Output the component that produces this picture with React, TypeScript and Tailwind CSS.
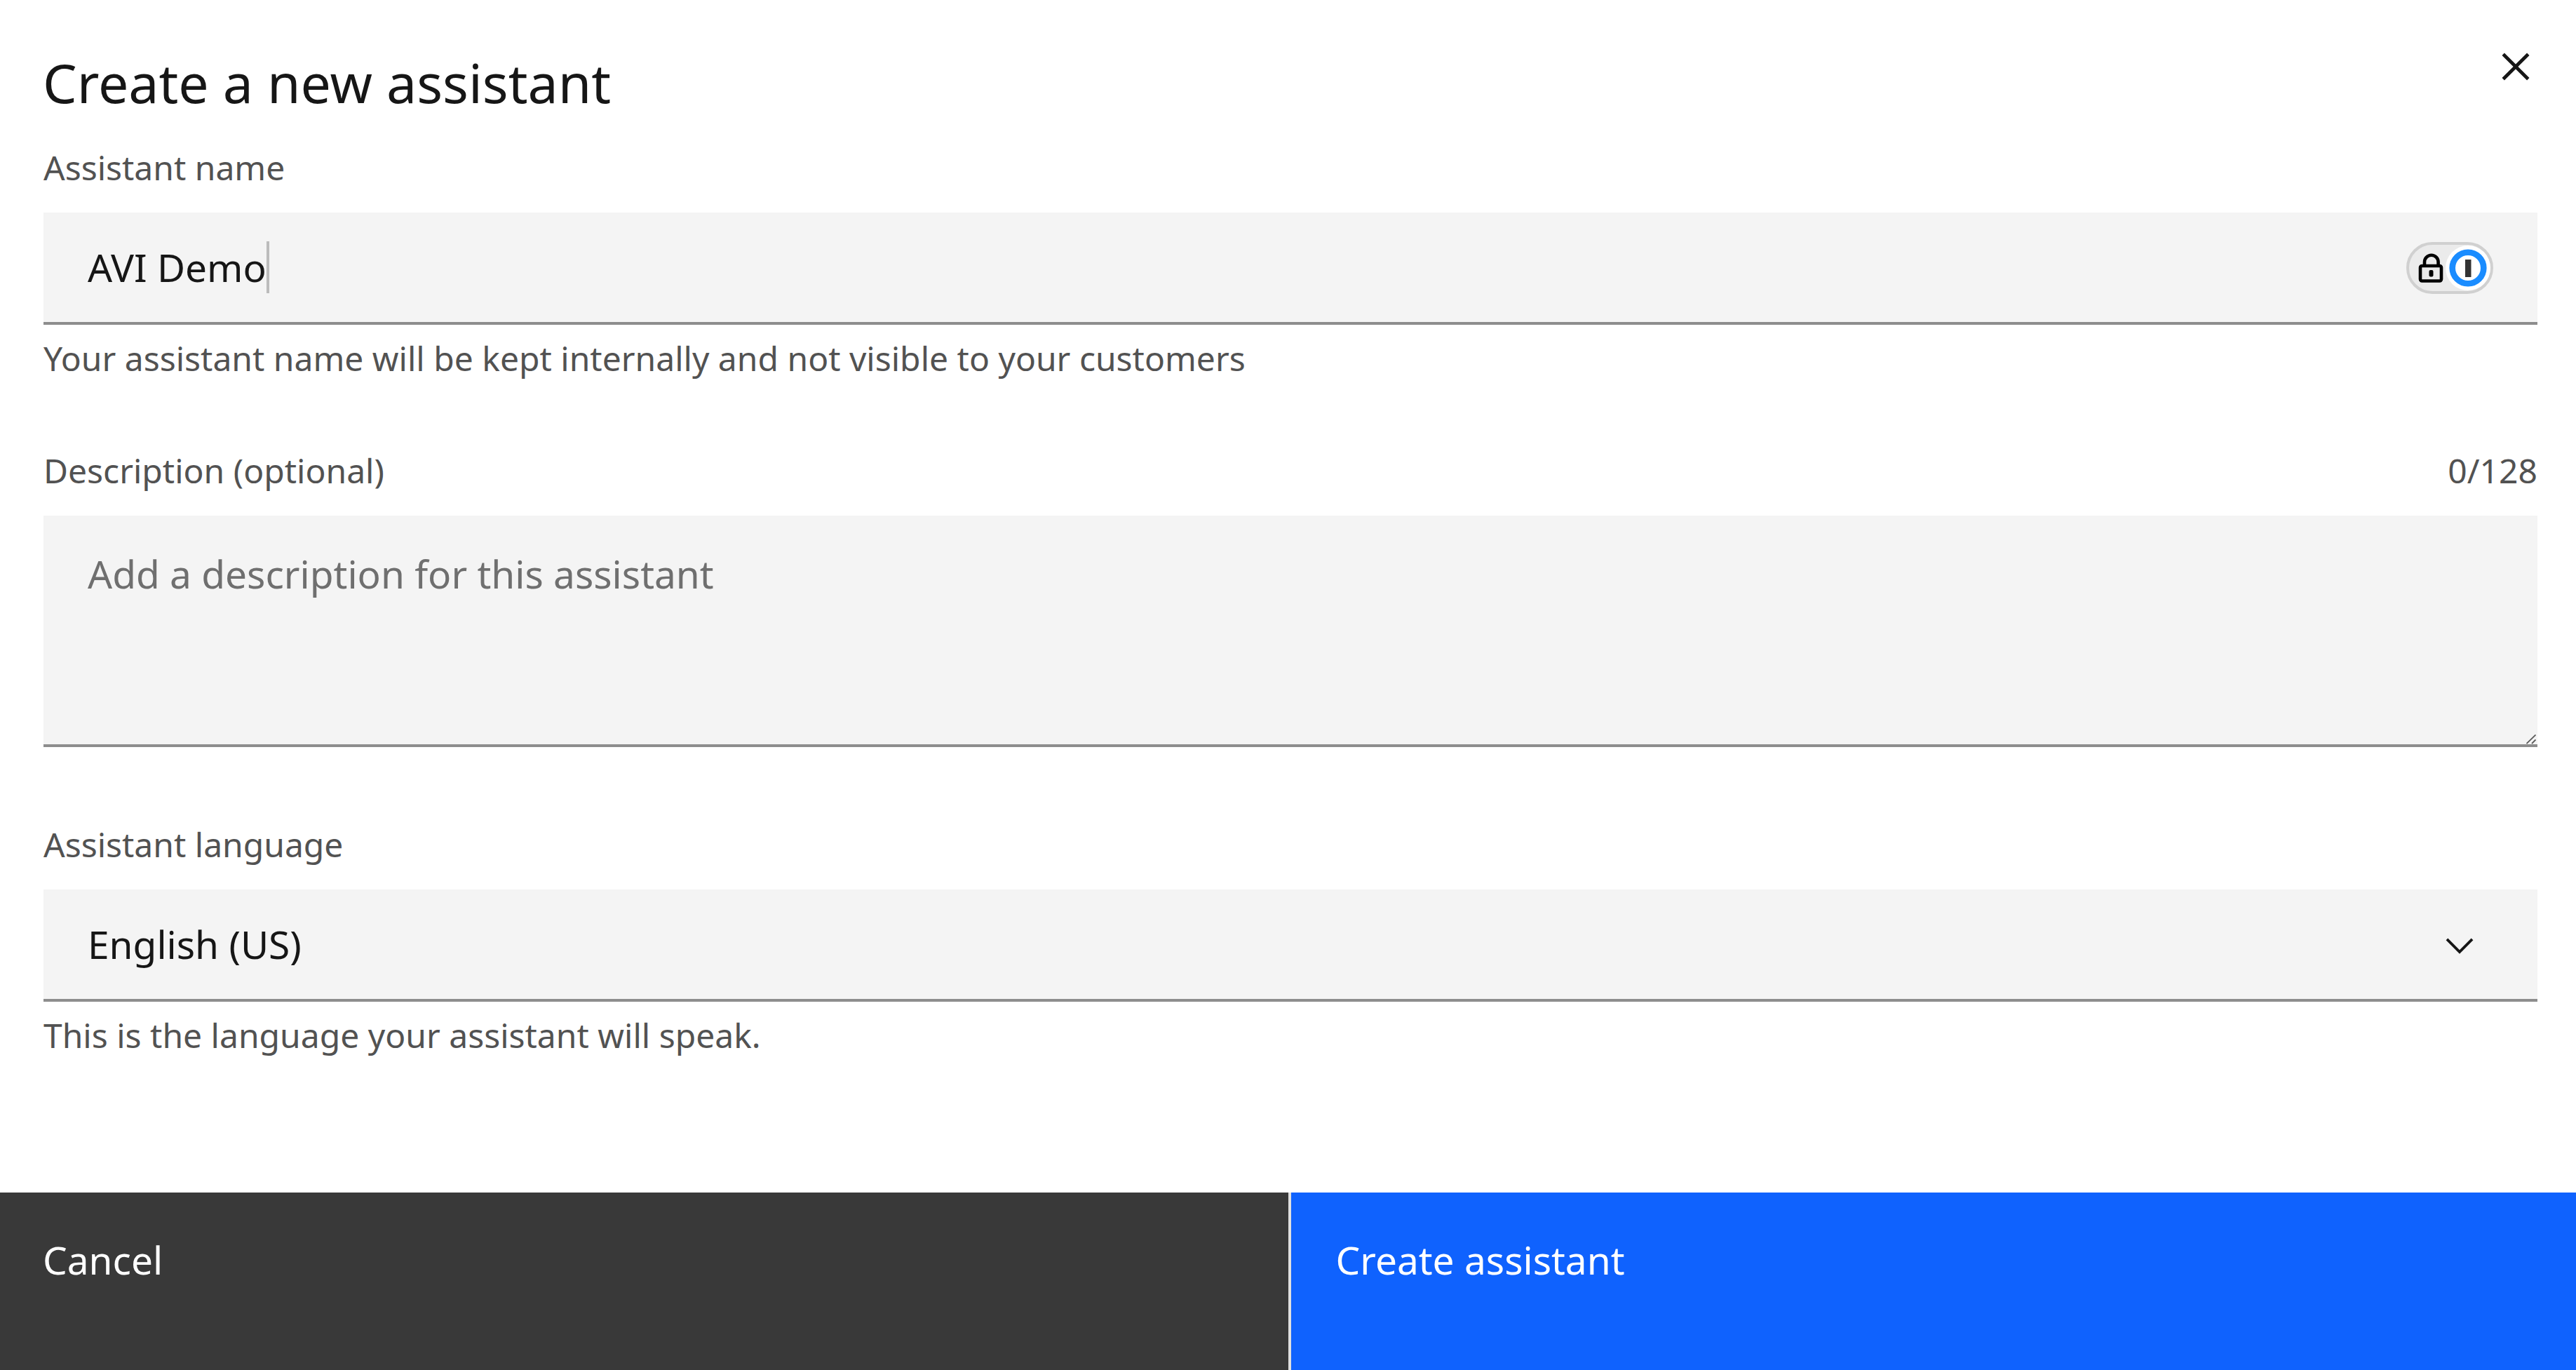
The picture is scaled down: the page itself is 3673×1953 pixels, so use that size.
import { useState } from "react";
import type { ReactNode } from "react";

const labelClass = "text-[48px] leading-[64px] text-[#525252]";

function CloseIcon() {
  return (
    <svg viewBox="0 0 32 32" className="size-[78px]" fill="currentColor" aria-hidden="true">
      <path d="M24 9.4 22.6 8 16 14.6 9.4 8 8 9.4l6.6 6.6L8 22.6 9.4 24l6.6-6.6 6.6 6.6 1.4-1.4-6.6-6.6L24 9.4z" />
    </svg>
  );
}

function ChevronDownIcon() {
  return (
    <svg viewBox="0 0 16 16" className="size-[62px]" fill="#161616" aria-hidden="true">
      <path d="M8 11 3 6l.7-.7L8 9.6l4.3-4.3.7.7z" />
    </svg>
  );
}

function PasswordManagerBadge() {
  return (
    <svg viewBox="0 0 124 74" className="h-[74px] w-[124px]" aria-hidden="true">
      <rect x="2" y="2" width="120" height="70" rx="35" fill="#ebebeb" stroke="#d0d0d0" strokeWidth="4" />
      <circle cx="88" cy="37" r="32" fill="#fff" />
      <circle cx="88" cy="37" r="22.3" fill="none" stroke="#1a8cff" strokeWidth="8.6" />
      <rect x="84" y="25" width="8.5" height="25" fill="#333" />
      <path d="M26 33v-4.500a9.800 9.800 0 0 1 19.600 0V33" fill="none" stroke="#000" strokeWidth="4.6" />
      <rect x="20" y="34" width="30" height="21.5" rx="2.5" fill="none" stroke="#000" strokeWidth="4.6" />
      <rect x="32.5" y="40" width="6" height="9.5" rx="2" fill="#000" />
    </svg>
  );
}

function ResizeHandle() {
  return (
    <svg viewBox="0 0 14 14" className="size-3.5" stroke="#5c5c5c" strokeWidth="1.8" aria-hidden="true">
      <path d="M.5 13 13.5 .5M8 13l5.500-5.500" fill="none" />
    </svg>
  );
}

function Helper({ id, children }: { id: string; children: ReactNode }) {
  return (
    <p id={id} className="mt-4 text-[48px] leading-[64px] text-[#525252]">
      {children}
    </p>
  );
}

export default function App() {
  const [name, setName] = useState("AVI Demo");
  const [description, setDescription] = useState("");
  const [language, setLanguage] = useState("en-US");

  return (
    <form
      className="flex min-h-screen flex-col bg-white font-['Noto_Sans',sans-serif] text-[#161616]"
      onSubmit={(event) => event.preventDefault()}
    >
      <header className="flex items-start justify-between pt-14 pr-[47px] pl-[61px]">
        <h1 className="mt-3 text-[77px] leading-[100px]">Create a new assistant</h1>
        <button type="button" aria-label="Close">
          <CloseIcon />
        </button>
      </header>

      <main className="pt-[39px] pr-[55px] pb-24 pl-[62px]">
        <section>
          <label htmlFor="assistant-name" className={`block ${labelClass}`}>
            Assistant name
          </label>
          <div className="mt-8 flex h-[160px] items-center border-b-4 border-[#8d8d8d] bg-[#f4f4f4] pr-[63px] pl-[63px]">
            <input
              id="assistant-name"
              type="text"
              value={name}
              aria-describedby="assistant-name-help"
              onChange={(event) => setName(event.target.value)}
              className="[field-sizing:content] h-20 bg-transparent text-[55px] leading-[80px] outline-none"
            />
            <span className="h-[74px] w-1 bg-[#bcbcbc]" aria-hidden="true" />
            <span className="ml-auto pt-0.5">
              <PasswordManagerBadge />
            </span>
          </div>
          <Helper id="assistant-name-help">
            Your assistant name will be kept internally and not visible to your customers
          </Helper>
        </section>

        <section className="mt-24">
          <div className="flex justify-between">
            <label htmlFor="description" className={labelClass}>
              Description (optional)
            </label>
            <span className={labelClass}>{description.length}/128</span>
          </div>
          <div className="relative mt-8">
            <textarea
              id="description"
              maxLength={128}
              value={description}
              placeholder="Add a description for this assistant"
              onChange={(event) => setDescription(event.target.value)}
              className="block h-[330px] w-full resize-none border-b-4 border-[#8d8d8d] bg-[#f4f4f4] px-[63px] pt-[43px] text-[55px] leading-[80px] outline-none placeholder:text-[#6f6f6f]"
            />
            <span className="pointer-events-none absolute right-0.5 bottom-1">
              <ResizeHandle />
            </span>
          </div>
        </section>

        <section className="mt-[107px]">
          <label htmlFor="language" className={`block ${labelClass}`}>
            Assistant language
          </label>
          <div className="relative mt-8">
            <select
              id="language"
              value={language}
              aria-describedby="language-help"
              onChange={(event) => setLanguage(event.target.value)}
              className="block h-[160px] w-full appearance-none border-b-4 border-[#8d8d8d] bg-[#f4f4f4] px-[63px] text-[55px] leading-[80px] outline-none"
            >
              <option value="en-US">English (US)</option>
            </select>
            <span className="pointer-events-none absolute inset-y-0 right-20 flex items-center">
              <ChevronDownIcon />
            </span>
          </div>
          <Helper id="language-help">This is the language your assistant will speak.</Helper>
        </section>
      </main>

      <footer className="mt-auto grid grid-cols-2 text-[55px] leading-[80px] text-white">
        <button type="button" className="bg-[#393939] pt-14 pb-[117px] pl-[61px] text-left">
          Cancel
        </button>
        <button
          type="submit"
          className="border-l-4 border-[#e0e0e0] bg-[#0f62fe] pt-14 pb-[117px] pl-16 text-left"
        >
          Create assistant
        </button>
      </footer>
    </form>
  );
}
